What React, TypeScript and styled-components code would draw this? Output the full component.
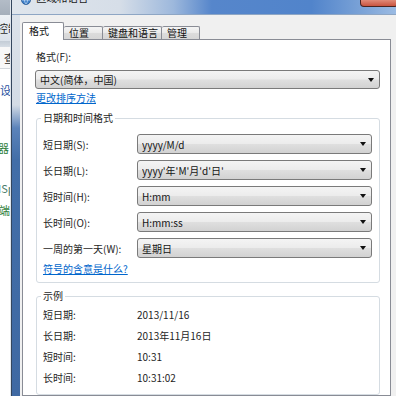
import styled, { createGlobalStyle } from "styled-components";

const GlobalStyle = createGlobalStyle`
  html, body {
    margin: 0;
    padding: 0;
    width: 396px;
    height: 396px;
    overflow: hidden;
    background: #f0f0f0;
  }
  body {
    font-family: "Noto Sans CJK SC", "Noto Sans", sans-serif;
    font-size: 10px;
    color: #1e1e1e;
  }
`;

interface ComboProps {
  value: string;
  tall?: boolean;
}

const Combo = ({ value, tall }: ComboProps) => (
  <ComboBox tall={tall}>
    <ComboText>{value}</ComboText>
    <Arrow />
  </ComboBox>
);

const formatRows = [
  { label: "短日期(S):", value: "yyyy/M/d" },
  { label: "长日期(L):", value: "yyyy'年'M'月'd'日'" },
  { label: "短时间(H):", value: "H:mm" },
  { label: "长时间(O):", value: "H:mm:ss" },
  { label: "一周的第一天(W):", value: "星期日" }
];

const sampleRows = [
  { label: "短日期:", value: "2013/11/16" },
  { label: "长日期:", value: "2013年11月16日" },
  { label: "短时间:", value: "10:31" },
  { label: "长时间:", value: "10:31:02" }
];

const tabs = [
  { name: "格式", width: 42 },
  { name: "位置", width: 39 },
  { name: "键盘和语言", width: 59 },
  { name: "管理", width: 38 }
];

const App = () => {
  return (
    <>
      <GlobalStyle />
      <Screen>
        <BackWindow>
          <BackTitle />
          <BackToolbar>
            <BackText shift={-3}>控制面板</BackText>
          </BackToolbar>
          <BackDivider />
          <BackSearch>
            <BackText shift={4}>查看</BackText>
          </BackSearch>
          <BackList>
            <BackItem gap={13} shift={0} color="#1f4fa0">设置</BackItem>
            <BackItem gap={42} shift={-2} color="#2e7d3a">器</BackItem>
            <BackItem gap={24} shift={-2} color="#4d7d6a">ISp</BackItem>
            <BackItem gap={6} shift={-1} color="#2e7d3a">端</BackItem>
          </BackList>
        </BackWindow>

        <Dialog>
          <TitleBar>
            <TitleIcon width="10" height="10" viewBox="0 0 10 10">
              <circle cx="5" cy="5" r="4.5" fill="#3d7fc9" stroke="#2a5a94" strokeWidth="0.8" />
              <path d="M1 5h8M5 1c-2 2-2 6 0 8M5 1c2 2 2 6 0 8" stroke="#cfe3f7" strokeWidth="0.7" fill="none" />
            </TitleIcon>
            <TitleText>区域和语言</TitleText>
            <CloseButton />
          </TitleBar>

          <ClientRow>
            <Client>
              <TabRow>
                {tabs.map((t, i) => (
                  <Tab key={t.name} active={i === 0} style={{ width: t.width }}>
                    {t.name}
                  </Tab>
                ))}
              </TabRow>

              <Panel>
                <FieldLabel>格式(F):</FieldLabel>
                <Combo value="中文(简体，中国)" tall />
                <Link>更改排序方法</Link>

                <Group>
                  <Legend>日期和时间格式</Legend>
                  <FormGrid>
                    {formatRows.map((r) => (
                      <FormRow key={r.label}>
                        <RowLabel>{r.label}</RowLabel>
                        <Combo value={r.value} />
                      </FormRow>
                    ))}
                  </FormGrid>
                  <GroupLink>符号的含意是什么?</GroupLink>
                </Group>

                <SampleGroup>
                  <Legend>示例</Legend>
                  {sampleRows.map((r) => (
                    <SampleRow key={r.label}>
                      <RowLabel>{r.label}</RowLabel>
                      <SampleValue>{r.value}</SampleValue>
                    </SampleRow>
                  ))}
                </SampleGroup>
              </Panel>
            </Client>
          </ClientRow>
        </Dialog>
      </Screen>
    </>
  );
};

const Screen = styled.div`
  display: flex;
  width: 396px;
  height: 396px;
  overflow: hidden;
`;

/* window behind the dialog, only a thin strip shows */
const BackWindow = styled.div`
  width: 11px;
  flex-shrink: 0;
  display: flex;
  flex-direction: column;
  overflow: hidden;
  background: #f4f6f8;
  border-right: 1px solid #dfe5ec;
  box-sizing: border-box;
`;

const BackTitle = styled.div`
  height: 15px;
  flex-shrink: 0;
  background: linear-gradient(#b3bcc7, #a5afbb);
`;

const BackToolbar = styled.div`
  height: 26px;
  flex-shrink: 0;
  background: linear-gradient(#eef2f6, #dbe2ea);
  display: flex;
  align-items: center;
`;

const BackDivider = styled.div`
  height: 6px;
  flex-shrink: 0;
  background: linear-gradient(#c3ccd6, #d6dde5);
`;

const BackSearch = styled.div`
  height: 21px;
  flex-shrink: 0;
  background: #f8f8f8;
  border-bottom: 1px solid #d3d7dc;
  display: flex;
  align-items: center;
`;

const BackText = styled.span<{ shift: number }>`
  white-space: nowrap;
  margin-left: ${({ shift }) => shift}px;
  font-size: 11px;
  color: #2b2b2b;
`;

const BackList = styled.div`
  display: flex;
  flex-direction: column;
  flex: 1;
  background: #ffffff;
`;

const BackItem = styled.span<{ gap: number; shift: number; color: string }>`
  white-space: nowrap;
  line-height: 16px;
  font-size: 11px;
  margin-top: ${({ gap }) => gap}px;
  margin-left: ${({ shift }) => shift}px;
  color: ${({ color }) => color};
`;

const Dialog = styled.div`
  flex: 1;
  display: flex;
  flex-direction: column;
  border-left: 1px solid #34465e;
  background: linear-gradient(#dde3ea 0, #d3dbe5 105px, #5b83ba 128px, #426ea8 160px, #3f69a3 100%);
`;

const TitleBar = styled.div`
  height: 15px;
  flex-shrink: 0;
  display: flex;
  align-items: flex-start;
  overflow: hidden;
  background: linear-gradient(90deg, #dfe5ec 0%, #d6dee8 28%, #9db8dc 42%, #5686cb 52%, #5184cb 78%, #7ea5d8 92%, #9bbbe3 100%);
  border-bottom: 1px solid #8ea6c4;
  box-sizing: border-box;
`;

const TitleIcon = styled.svg`
  margin: -5px 0 0 9px;
  flex-shrink: 0;
`;

const TitleText = styled.span`
  margin: -9px 0 0 5px;
  line-height: 14px;
  font-size: 10.5px;
  color: #1b1b1b;
  white-space: nowrap;
`;

const CloseButton = styled.div`
  margin-left: auto;
  width: 38px;
  height: 7px;
  margin-right: -2px;
  box-sizing: border-box;
  border: 1px solid #4a2420;
  border-top: none;
  border-radius: 0 0 4px 4px;
  background: linear-gradient(#e08a78, #c9543f);
`;

const ClientRow = styled.div`
  flex: 1;
  display: flex;
  padding-left: 8px;
  min-height: 0;
`;

const Client = styled.div`
  flex: 1;
  display: flex;
  flex-direction: column;
  background: #f0f0f0;
  padding: 7px 5px 0 2px;
  min-width: 0;
`;

const TabRow = styled.div`
  display: flex;
  align-items: flex-end;
  height: 17px;
  flex-shrink: 0;
`;

const Tab = styled.div<{ active?: boolean }>`
  box-sizing: border-box;
  height: ${({ active }) => (active ? 18 : 13)}px;
  margin-bottom: ${({ active }) => (active ? -1 : 0)}px;
  position: relative;
  z-index: ${({ active }) => (active ? 2 : 1)};
  border: 1px solid #898c95;
  border-bottom: none;
  border-left-width: ${({ active }) => (active ? 1 : 0)}px;
  border-radius: 2px 2px 0 0;
  background: ${({ active }) =>
    active ? "#ffffff" : "linear-gradient(#f4f4f4, #e9e9e9 50%, #dcdcdc 51%, #d6d6d6)"};
  display: flex;
  align-items: ${({ active }) => (active ? "flex-start" : "center")};
  padding: ${({ active }) => (active ? "1px 0 0 6px" : "0 0 0 5px")};
  font-size: 10px;
  line-height: 14px;
  color: #111;
  white-space: nowrap;
`;

const Panel = styled.div`
  flex: 1;
  display: flex;
  flex-direction: column;
  background: #ffffff;
  border: 1px solid #898c95;
  padding: 9px 10px 0 12px;
  min-height: 0;
`;

const FieldLabel = styled.div`
  line-height: 16px;
  margin-left: 1px;
`;

const ComboBox = styled.div<{ tall?: boolean }>`
  box-sizing: border-box;
  height: ${({ tall }) => (tall ? 21 : 20)}px;
  margin-top: ${({ tall }) => (tall ? 5 : 0)}px;
  display: flex;
  align-items: center;
  border: 1px solid #7a7a7a;
  border-radius: 3px;
  background: linear-gradient(#f4f4f4, #ececec 48%, #dfdfdf 52%, #d2d2d2);
  padding-left: 4px;
  min-width: 0;
`;

const ComboText = styled.span`
  white-space: nowrap;
  overflow: hidden;
  color: #151515;
`;

const Arrow = styled.span`
  margin-left: auto;
  margin-right: 5px;
  width: 0;
  height: 0;
  border-left: 3px solid transparent;
  border-right: 3px solid transparent;
  border-top: 4px solid #111;
  flex-shrink: 0;
`;

const Link = styled.div`
  line-height: 16px;
  margin: 1px 0 0 1px;
  color: #0066cc;
  text-decoration: underline;
  align-self: flex-start;
`;

const Group = styled.fieldset`
  margin: 4px 0 0 1px;
  padding: 8px 7px 5px 6px;
  border: 1px solid #d5dce2;
  border-radius: 3px;
  min-width: 0;
`;

const SampleGroup = styled(Group)`
  margin-top: 5px;
  padding: 0 7px 6px 6px;
`;

const Legend = styled.legend`
  padding: 0 2px;
  margin-left: -2px;
  line-height: 16px;
  font-size: 10px;
  color: #1e1e1e;
`;

const FormGrid = styled.div`
  display: flex;
  flex-direction: column;
  gap: 6px;
`;

const FormRow = styled.div`
  display: grid;
  grid-template-columns: 94px 1fr;
  align-items: center;
  height: 20px;
`;

const RowLabel = styled.span`
  white-space: nowrap;
  color: #1e1e1e;
`;

const GroupLink = styled(Link)`
  margin: 3px 0 0 0;
`;

const SampleRow = styled.div`
  display: grid;
  grid-template-columns: 94px 1fr;
  align-items: center;
  height: 21px;
`;

const SampleValue = styled.span`
  white-space: nowrap;
  color: #1e1e1e;
`;

export default App;
